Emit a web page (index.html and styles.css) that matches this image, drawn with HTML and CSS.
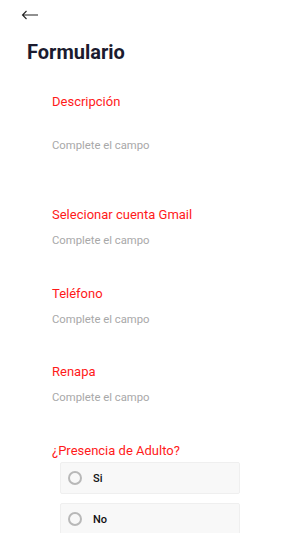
FILE: index.html
```html
<!DOCTYPE html>
<html lang="es">
<head>
    <meta charset="UTF-8">
    <meta name="viewport" content="width=device-width, initial-scale=1.0">
    <title>Formulario</title>
    <link rel="stylesheet" href="styles.css">
</head>
<body>
    <div id="screen">
        <div class="topbar">
            <svg class="back" width="18" height="10" viewBox="0 0 18 10">
                <path d="M17 5H1.5M5.5 1L1.5 5l4 4" fill="none" stroke="#222" stroke-width="1.1"/>
            </svg>
        </div>
        <h1>Formulario</h1>
        <div class="form">
            <div class="field field-tall">
                <div class="label">Descripción</div>
                <div class="hint">Complete el campo</div>
            </div>
            <div class="field">
                <div class="label">Selecionar cuenta Gmail</div>
                <div class="hint">Complete el campo</div>
            </div>
            <div class="field">
                <div class="label">Teléfono</div>
                <div class="hint">Complete el campo</div>
            </div>
            <div class="field">
                <div class="label">Renapa</div>
                <div class="hint">Complete el campo</div>
            </div>
            <div class="field field-radio">
                <div class="label">¿Presencia de Adulto?</div>
                <div class="options">
                    <div class="option"><span class="radio"></span>Si</div>
                    <div class="option"><span class="radio"></span>No</div>
                </div>
            </div>
        </div>
    </div>
</body>
</html>
```

FILE: styles.css
```css
body {
    margin: 0;
    background: #ffffff;
    font-family: Roboto, "Liberation Sans", sans-serif;
}
#screen {
    width: 300px;
    height: 533px;
    overflow: hidden;
}
.topbar {
    height: 30px;
    padding-left: 21px;
    display: flex;
    align-items: center;
}
.back {
    display: block;
}
h1 {
    margin: 8px 0 0 27px;
    font-size: 20px;
    font-weight: 700;
    color: #1b1b2f; /* dark navy title */
    line-height: 28px;
}
.form {
    padding: 0 0 0 52px;
}
.field {
    display: flex;
    flex-direction: column;
    height: 78.7px;
}
.label {
    color: #ff1a1a; /* red labels */
    font-size: 13px;
    line-height: 16px;
}
.hint {
    color: #a8a8a8;
    font-size: 11.3px;
    line-height: 14px;
    margin-top: 11px;
}
.field-tall {
    margin-top: 28px;
    height: 113px;
}
.field-tall .hint {
    margin-top: 29px;
}
.field-radio {
    height: auto;
}
.options {
    margin-top: 3px;
    margin-left: 8px;
    display: flex;
    flex-direction: column;
    gap: 9px;
}
.option {
    width: 180px;
    height: 32px;
    box-sizing: border-box;
    background: #f8f8f8;
    border: 1px solid #efefef;
    border-radius: 2px;
    display: flex;
    align-items: center;
    padding-left: 7px;
    font-size: 11px;
    font-weight: 500;
    color: #111;
}
.radio {
    width: 14px;
    height: 14px;
    box-sizing: border-box;
    border: 2px solid #b8b8b8;
    border-radius: 50%;
    margin-right: 11px;
}
```
